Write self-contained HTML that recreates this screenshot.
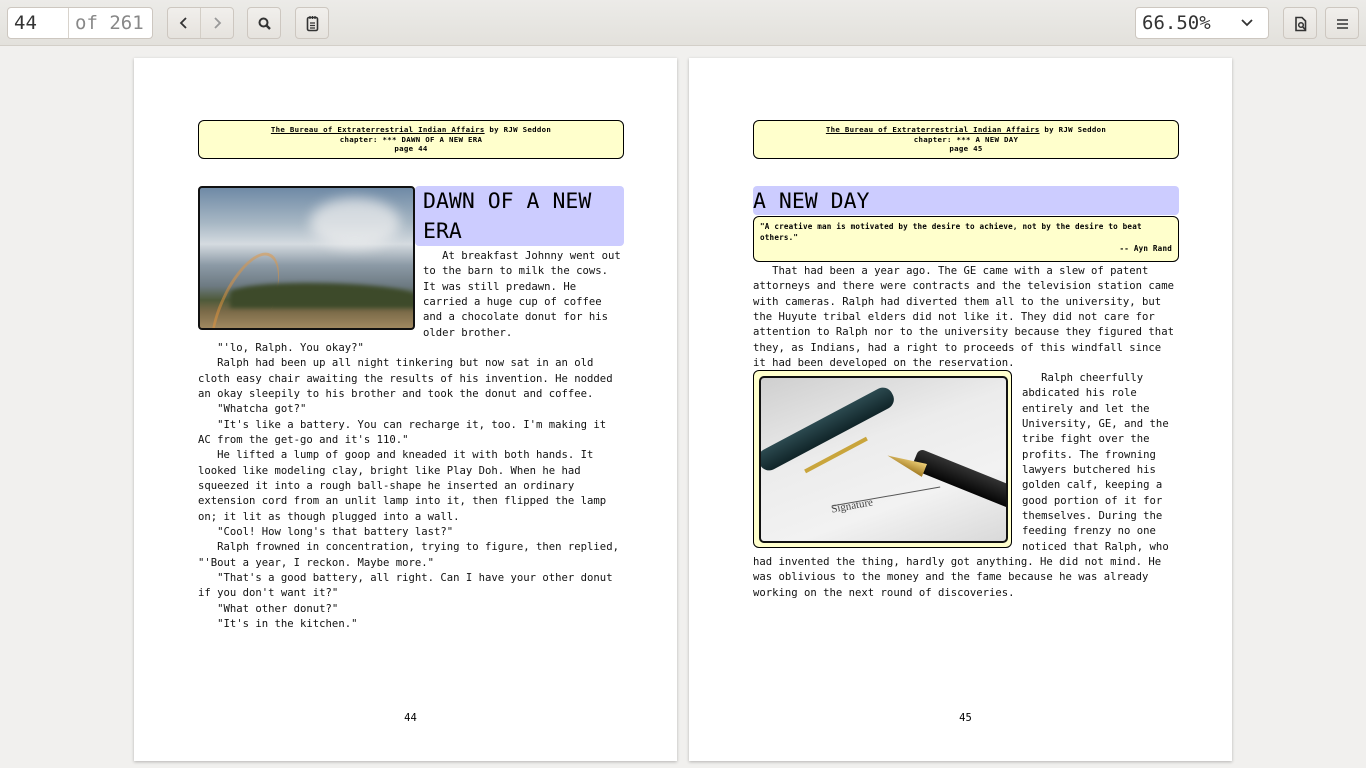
<!DOCTYPE html>
<html><head><meta charset="utf-8"><style>
*{margin:0;padding:0;box-sizing:border-box}
body{width:1366px;height:768px;background:#f1f0ee;font-family:"DejaVu Sans Mono","Liberation Mono",monospace;position:relative;overflow:hidden}
.tb{position:absolute;left:0;top:0;width:1366px;height:46px;background:linear-gradient(#ecebe8,#e3e1dc);border-bottom:1px solid #d3cfc8}
.btn{position:absolute;top:7px;height:32px;border:1px solid #cdc7c0;border-radius:4px;background:linear-gradient(#f1efec,#e6e3de)}
.page{position:absolute;top:58px;width:543px;height:703px;background:#fff;box-shadow:0 1px 3px rgba(0,0,0,.25)}
.hdr{position:absolute;left:64px;top:62px;width:426px;height:39px;background:#ffffcc;border:1px solid #000;border-radius:6px;text-align:center;font-family:"DejaVu Sans Mono",monospace;font-size:7.4px;letter-spacing:0.3px;font-weight:bold;line-height:9.6px;padding-top:4px}
.t{position:absolute;font-size:10.6px;line-height:15.33px;white-space:pre;color:#111}
.h{position:absolute;background:#ccccff;border-radius:4px;font-size:21.5px;line-height:30px;color:#000}
.pn{position:absolute;top:654px;left:5px;width:100%;text-align:center;font-size:10.5px}
</style></head><body>
<div class="tb">
 <div class="btn" style="left:7px;width:146px;background:#fff"><div style="position:absolute;left:60px;top:0;width:1px;height:30px;background:#d8d3cc"></div>
  <span style="position:absolute;left:6px;top:4px;font-size:19px;color:#333">44</span>
  <span style="position:absolute;left:67px;top:4px;font-size:19px;color:#888">of 261</span></div>
 <div class="btn" style="left:167px;width:67px"><div style="position:absolute;left:32px;top:0;width:1px;height:30px;background:#d3cec6"></div>
  <svg style="position:absolute;left:10px;top:9px" width="12" height="12"><path d="M8 1 L3 6 L8 11" stroke="#333" stroke-width="1.8" fill="none"/></svg>
  <svg style="position:absolute;left:43px;top:9px" width="12" height="12"><path d="M4 1 L9 6 L4 11" stroke="#999" stroke-width="1.8" fill="none"/></svg></div>
 <div class="btn" style="left:247px;width:34px"><svg style="position:absolute;left:9px;top:8px" width="16" height="16"><circle cx="6.5" cy="6.5" r="4" stroke="#333" stroke-width="2" fill="none"/><path d="M9.5 9.5 L13 13" stroke="#333" stroke-width="2.4"/></svg></div>
 <div class="btn" style="left:295px;width:34px"><svg style="position:absolute;left:9px;top:7px" width="16" height="18"><rect x="2.5" y="2.5" width="10" height="13" rx="1.5" stroke="#333" stroke-width="1.6" fill="none"/><path d="M5 1v3M7.5 1v3M10 1v3M5 8h5M5 10.5h5M5 13h5" stroke="#333" stroke-width="1.2"/></svg></div>
 <div class="btn" style="left:1135px;width:134px;background:#fff"><span style="position:absolute;left:6px;top:4px;font-size:19px;color:#333">66.50%</span>
  <svg style="position:absolute;left:104px;top:10px" width="14" height="10"><path d="M2 2 L7 7 L12 2" stroke="#333" stroke-width="1.8" fill="none"/></svg></div>
 <div class="btn" style="left:1283px;width:34px"><svg style="position:absolute;left:9px;top:8px" width="16" height="16"><path d="M3 1.5h6l3.5 3.5v9.5h-9.5z" stroke="#333" stroke-width="1.6" fill="none"/><circle cx="8" cy="9" r="2.3" stroke="#333" stroke-width="1.5" fill="none"/><path d="M9.5 10.5l2.5 3" stroke="#333" stroke-width="1.5"/></svg></div>
 <div class="btn" style="left:1325px;width:34px"><svg style="position:absolute;left:10px;top:10px" width="14" height="12"><path d="M1 2h11M1 6h11M1 10h11" stroke="#333" stroke-width="1.6"/></svg></div>
</div>

<div class="page" style="left:134px">
 <div class="hdr"><u>The Bureau of Extraterrestrial Indian Affairs</u> by RJW Seddon<br>chapter: *** DAWN OF A NEW ERA<br>page 44</div>
 <div style="position:absolute;left:64px;top:128px;width:217px;height:144px;border:2px solid #111;border-radius:4px;overflow:hidden;background:linear-gradient(180deg,#6f8aa6 0%,#a7b7c4 25%,#d5dbe0 40%,#8c9aa6 55%,#6d7a82 70%,#4e5a3a 80%,#7a6a48 88%,#a08860 100%)">
  <div style="position:absolute;left:110px;top:10px;width:90px;height:50px;border-radius:50%;background:rgba(240,240,240,.7);filter:blur(6px)"></div>
  <div style="position:absolute;left:20px;top:60px;width:50px;height:120px;border-radius:50%;border:3px solid rgba(230,150,60,.5);border-right:none;border-bottom:none;transform:rotate(25deg)"></div>
  <div style="position:absolute;left:30px;top:95px;width:190px;height:25px;background:#3d4a2a;border-radius:40% 60% 0 0;filter:blur(2px)"></div>
 </div>
 <div class="h" style="left:281px;top:128px;width:209px;height:60px;padding-left:8px;padding-top:1px">DAWN OF A NEW<br>ERA</div>
 <div class="t" style="left:289px;top:191px">   At breakfast Johnny went out
to the barn to milk the cows.
It was still predawn. He
carried a huge cup of coffee
and a chocolate donut for his
older brother.</div>
 <div class="t" style="left:64px;top:283px">   "'lo, Ralph. You okay?"
   Ralph had been up all night tinkering but now sat in an old
cloth easy chair awaiting the results of his invention. He nodded
an okay sleepily to his brother and took the donut and coffee.
   "Whatcha got?"
   "It's like a battery. You can recharge it, too. I'm making it
AC from the get-go and it's 110."
   He lifted a lump of goop and kneaded it with both hands. It
looked like modeling clay, bright like Play Doh. When he had
squeezed it into a rough ball-shape he inserted an ordinary
extension cord from an unlit lamp into it, then flipped the lamp
on; it lit as though plugged into a wall.
   "Cool! How long's that battery last?"
   Ralph frowned in concentration, trying to figure, then replied,
"'Bout a year, I reckon. Maybe more."
   "That's a good battery, all right. Can I have your other donut
if you don't want it?"
   "What other donut?"
   "It's in the kitchen."</div>
 <div class="pn">44</div>
</div>

<div class="page" style="left:689px">
 <div class="hdr"><u>The Bureau of Extraterrestrial Indian Affairs</u> by RJW Seddon<br>chapter: *** A NEW DAY<br>page 45</div>
 <div class="h" style="left:64px;top:128px;width:426px;height:29px;padding-top:1px">A NEW DAY</div>
 <div style="position:absolute;left:64px;top:158px;width:426px;height:46px;background:#ffffcc;border:1px solid #000;border-radius:6px;font-size:7.6px;letter-spacing:0.2px;font-weight:bold;line-height:10.5px;padding:5px 6px 0">"A creative man is motivated by the desire to achieve, not by the desire to beat<br>others."<div style="text-align:right;margin-top:1px">-- Ayn Rand</div></div>
 <div class="t" style="left:64px;top:206px">   That had been a year ago. The GE came with a slew of patent
attorneys and there were contracts and the television station came
with cameras. Ralph had diverted them all to the university, but
the Huyute tribal elders did not like it. They did not care for
attention to Ralph nor to the university because they figured that
they, as Indians, had a right to proceeds of this windfall since
it had been developed on the reservation.</div>
 <div style="position:absolute;left:64px;top:312px;width:259px;height:178px;background:#ffffcc;border:1px solid #000;border-radius:6px">
  <div style="position:absolute;left:5px;top:5px;width:249px;height:167px;border:2px solid #111;border-radius:5px;overflow:hidden;background:linear-gradient(160deg,#cfcfcf,#ececec 40%,#f2f2f2 70%,#d9d9d9)">
   <div style="position:absolute;left:-10px;top:40px;width:150px;height:22px;background:linear-gradient(#2c4a50,#102428);border-radius:10px;transform:rotate(-28deg)"></div>
   <div style="position:absolute;left:40px;top:75px;width:70px;height:4px;background:#c9a53c;transform:rotate(-28deg)"></div>
   <div style="position:absolute;left:150px;top:90px;width:110px;height:22px;background:linear-gradient(#333,#050505);border-radius:6px;transform:rotate(22deg)"></div>
   <div style="position:absolute;left:125px;top:78px;width:40px;height:14px;background:linear-gradient(#f0d27a,#a07820);clip-path:polygon(0 50%,100% 0,100% 100%);transform:rotate(22deg)"></div>
   <div style="position:absolute;left:70px;top:122px;font-family:'Liberation Serif',serif;font-size:11px;color:#444;transform:rotate(-10deg)">Signature</div>
   <div style="position:absolute;left:70px;top:118px;width:110px;height:1px;background:#555;transform:rotate(-10deg)"></div>
  </div>
 </div>
 <div class="t" style="left:333px;top:313px">   Ralph cheerfully
abdicated his role
entirely and let the
University, GE, and the
tribe fight over the
profits. The frowning
lawyers butchered his
golden calf, keeping a
good portion of it for
themselves. During the
feeding frenzy no one
noticed that Ralph, who</div>
 <div class="t" style="left:64px;top:497px">had invented the thing, hardly got anything. He did not mind. He
was oblivious to the money and the fame because he was already
working on the next round of discoveries.</div>
 <div class="pn">45</div>
</div>
</body></html>
